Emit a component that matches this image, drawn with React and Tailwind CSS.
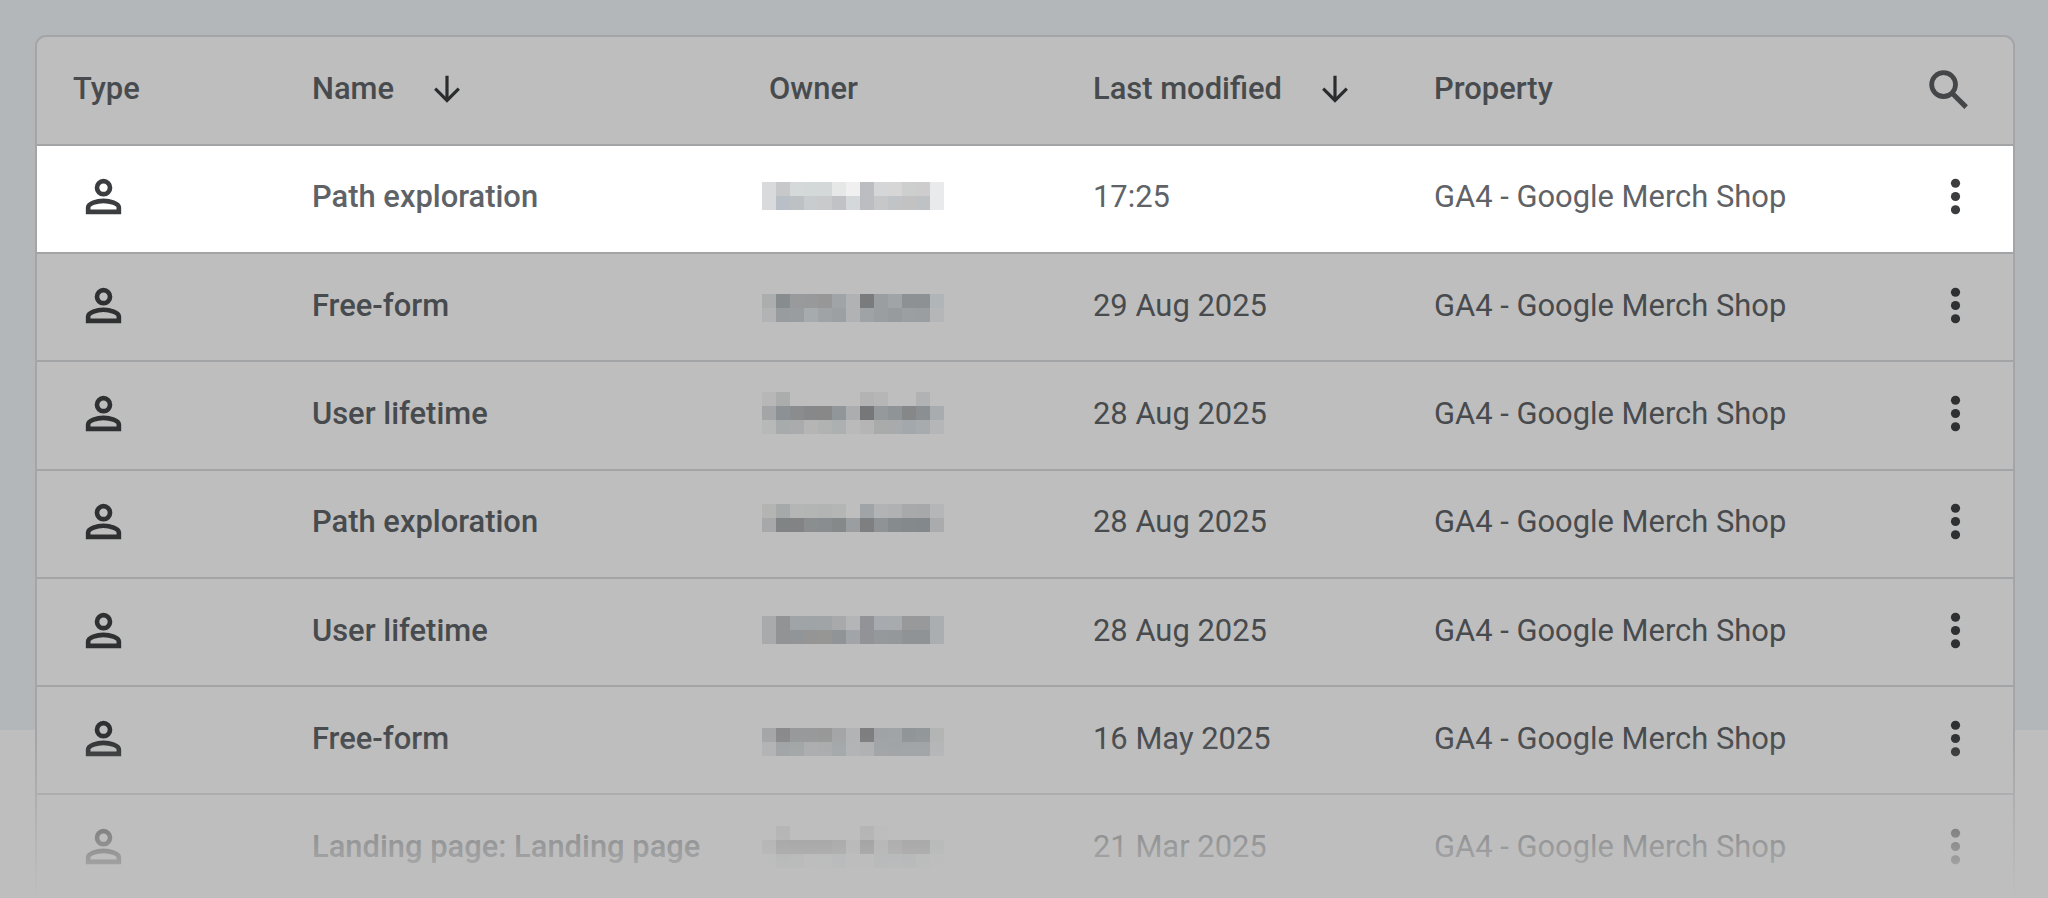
// Greys for the pixelated owner names, one entry per 14px cell
const rows = [
  {
    name: 'Path exploration',
    modified: '17:25',
    offset: 'mt-[36.3px]',
    mosaic: [
      ['#d9dadb', '#c6c8ca', '#d6d9da', '#d3d8d9', '#d5d8d9', '#e6e7e7', '#f0f0f0', '#bcbdc0', '#d5d6d7', '#d6d6d7', '#cdcece', '#cdcdce', '#e8eaeb'],
      ['#d9dadb', '#b9bfc6', '#bec1c4', '#c8cccf', '#c8cacc', '#c0c2c6', '#d5d8da', '#bcbdc0', '#c5c7c9', '#c1c4c7', '#c2c2c3', '#bec2c5', '#e8eaeb'],
    ],
  },
  {
    name: 'Free-form',
    modified: '29 Aug 2025',
    offset: 'mt-[40px]',
    mosaic: [
      ['#acadad', '#878c8f', '#989a9c', '#98999a', '#979797', '#a1a4a7', '#b0b2b4', '#7a7b7c', '#9b9ea0', '#a0a4a6', '#8d9193', '#8d9193', '#b0b5b8'],
      ['#b1b3b4', '#989c9f', '#9a9da0', '#a6acae', '#9fa3a6', '#9ca0a3', '#b0b2b4', '#9fa3a6', '#9a9ea1', '#979b9e', '#9c9fa1', '#9a9ea1', '#b5b6b7'],
    ],
  },
  {
    name: 'User lifetime',
    modified: '28 Aug 2025',
    offset: 'mt-[29.7px]',
    mosaic: [
      ['#b7b7b7', '#abadad', '#bebebe', '#bebebe', '#bebebe', '#bebebe', '#bebebe', '#b3b3b3', '#b6b6b6', '#bebebe', '#bebebe', '#b1b2b3', '#bebebe'],
      ['#a3a5a6', '#8b9194', '#8b8c8d', '#868889', '#888889', '#91969a', '#abadae', '#767778', '#96999b', '#8f9496', '#858789', '#8c8f91', '#a9acae'],
      ['#b7b8b8', '#a8abac', '#a9abac', '#b4b5b4', '#b1b2b2', '#acb0b1', '#bababa', '#b4b5b4', '#a9abab', '#a8aaab', '#a2a8ab', '#a7abad', '#b4b6b7'],
    ],
  },
  {
    name: 'Path exploration',
    modified: '28 Aug 2025',
    offset: 'mt-[33.4px]',
    mosaic: [
      ['#b4b5b3', '#a6a9a9', '#b4b5b5', '#b3b4b4', '#b2b3b3', '#b4b5b5', '#bebebe', '#a1a4a6', '#b1b3b4', '#b0b1b2', '#a7a9aa', '#a6a8a9', '#b5b6b7'],
      ['#a6a8a9', '#808485', '#818385', '#8a8e8f', '#898d8f', '#85898a', '#9b9ea0', '#7d7f81', '#909395', '#868b8d', '#848a8b', '#82888b', '#a9abac'],
    ],
  },
  {
    name: 'User lifetime',
    modified: '28 Aug 2025',
    offset: 'mt-[37.1px]',
    mosaic: [
      ['#a8aaab', '#919394', '#a0a4a6', '#9fa4a6', '#a0a4a6', '#a8a9aa', '#b4b5b6', '#919396', '#a7aaae', '#a8abae', '#98999b', '#98999b', '#abaeb0'],
      ['#a8aaab', '#919394', '#919597', '#959595', '#969695', '#919496', '#a1a5a9', '#919396', '#95999b', '#94989b', '#909396', '#909396', '#abaeb0'],
    ],
  },
  {
    name: 'Free-form',
    modified: '16 May 2025',
    offset: 'mt-[40.8px]',
    mosaic: [
      ['#a5a6a7', '#8a8a8d', '#98999b', '#98999b', '#999898', '#a3a5a7', '#b2b3b4', '#7e7e81', '#a0a3a5', '#a0a4a6', '#909597', '#92979a', '#b3b4b4'],
      ['#b1b3b4', '#9fa3a5', '#a0a5a6', '#abacad', '#aaabac', '#a2a7a9', '#b2b3b4', '#aeb0b1', '#a0a3a5', '#9fa2a5', '#9fa3a6', '#9fa3a6', '#b5b6b7'],
    ],
  },
  {
    name: 'Landing page: Landing page',
    modified: '21 Mar 2025',
    offset: 'mt-[30.5px]',
    mosaic: [
      ['#bebebe', '#aaaaaa', '#bebebe', '#bebebe', '#bebebe', '#bebebe', '#bebebe', '#a8a8a8', '#bababa', '#bebebe', '#bebebe', '#bebebe', '#bebebe'],
      ['#a9a9a9', '#848484', '#828282', '#828282', '#828282', '#8a8a8a', '#b2b2b2', '#767676', '#acacac', '#929292', '#848484', '#848484', '#b0b4b4'],
      ['#bbbcbc', '#a8adae', '#adafb0', '#bababa', '#b4b8b9', '#a9b3b5', '#bbbbbb', '#bbbbbb', '#a4aeb0', '#aaafb1', '#a5acae', '#b3b6b7', '#bcbcbc'],
    ],
  },
]

const columns = 'grid grid-cols-[239px_457px_324px_341px_1fr_auto]'

const ArrowDown = () => (
  <svg className="-mt-[2px] h-[28px] w-[28px] text-[#2b2c2d]" viewBox="0 0 28 28" fill="none" stroke="currentColor" strokeWidth="3.2">
    <path d="M14 0.8V26" />
    <path d="M2.2 13.6L14 25.4L25.8 13.6" />
  </svg>
)

const PersonIcon = ({ className }) => (
  <svg className={`size-[53px] ${className}`} viewBox="0 0 24 24" fill="none" stroke="currentColor" strokeWidth="2.1">
    <circle cx="12" cy="8" r="2.95" />
    <path d="M5.05 18.95V17C5.05 15.2 9.1 13.95 12 13.95S18.95 15.2 18.95 17V18.95Z" />
  </svg>
)

const SearchIcon = ({ className }) => (
  <svg className={`size-[52px] ${className}`} viewBox="0 0 24 24" fill="none" stroke="currentColor" strokeWidth="2.2">
    <circle cx="9.5" cy="9.5" r="5.5" />
    <path d="M13.7 13.7L19.9 19.9" strokeWidth="2.3" />
  </svg>
)

const MoreIcon = ({ className }) => (
  <svg className={`size-[53px] ${className}`} viewBox="0 0 24 24" fill="currentColor">
    <circle cx="12" cy="6" r="2.08" />
    <circle cx="12" cy="12" r="2.08" />
    <circle cx="12" cy="18" r="2.08" />
  </svg>
)

const Mosaic = ({ cells, offset }) => (
  <div className={`-ml-[7px] grid w-[182px] grid-cols-13 self-start ${offset}`}>
    {cells.flat().map((color, i) => (
      <div key={i} className="h-[14px]" style={{ backgroundColor: color }} />
    ))}
  </div>
)

const Row = ({ row, active }) => (
  <div
    className={`${columns} h-[108.3px] items-center border-t-2 border-[#a3a4a6] pr-[31px] pb-[2px] pl-[36px] ${
      active ? 'bg-white text-[#5f6368]' : 'text-[#484b4e]'
    }`}
  >
    <PersonIcon className={`-mt-[2px] ml-[4px] ${active ? 'text-[#3c3d3f]' : 'text-[#2f3031]'}`} />
    <div className="font-medium">{row.name}</div>
    <Mosaic cells={row.mosaic} offset={row.offset} />
    <div>{row.modified}</div>
    <div>GA4 - Google Merch Shop</div>
    <MoreIcon className={`-mt-[2px] ${active ? 'text-[#3c3d3f]' : 'text-[#2f3031]'}`} />
  </div>
)

export default function App() {
  return (
    <div className="relative h-[898px] w-full overflow-hidden bg-[#bebebe] font-['Roboto',sans-serif] text-[30.9px] leading-none whitespace-nowrap">
      <div className="h-[730px] bg-[#b3b7ba]">
        {/* Card, runs past the bottom of the view */}
        <div className="pt-[35px] pr-[33px] pl-[35px]">
          <div className="h-[900px] overflow-hidden rounded-t-[11px] border-2 border-[#a3a5a8] bg-[#bebebe]">
            <div className={`${columns} h-[106.7px] items-center pr-[38px] pb-[1px] pl-[36px] font-medium text-[#484b4e]`}>
              <div>Type</div>
              <div className="flex items-center gap-[39px]">
                Name
                <ArrowDown />
              </div>
              <div>Owner</div>
              <div className="flex items-center gap-[39px]">
                Last modified
                <ArrowDown />
              </div>
              <div>Property</div>
              <SearchIcon className="text-[#444648]" />
            </div>
            {rows.map((row, i) => (
              <Row key={i} row={row} active={i === 0} />
            ))}
          </div>
        </div>
      </div>

      {/* Bottom fade */}
      <div className="absolute inset-x-0 bottom-0 h-[163px] bg-linear-to-b from-[#bebebe]/0 to-[#bebebe]" />
    </div>
  )
}
